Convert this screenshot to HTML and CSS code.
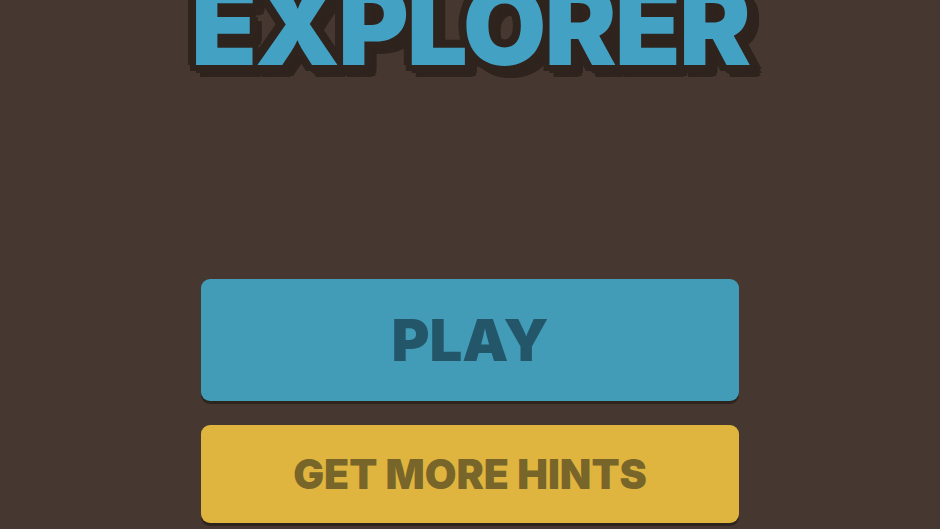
FILE: index.html
```html
<!DOCTYPE html>
<html>
<head>
<meta charset="utf-8">
<link rel="stylesheet" href="styles.css">
</head>
<body>
<main class="screen">
  <h1 class="title">EXPLORER</h1>
  <div class="menu">
    <button class="btn btn-play">PLAY</button>
    <button class="btn btn-hints">GET MORE HINTS</button>
  </div>
</main>
</body>
</html>
```
FILE: styles.css
```css
html, body {
  margin: 0;
  padding: 0;
  background: #463830;
}
.screen {
  width: 940px;
  height: 529px;
  overflow: hidden;
  display: flex;
  flex-direction: column;
  align-items: center;
  font-family: Inter, Lato, sans-serif;
}
.title {
  margin: -33px 0 0 0;
  font-size: 108px;
  line-height: 118px;
  font-weight: 900;
  color: #43a1c4;
  letter-spacing: -2px;
  text-shadow:
    -8px 0 0 #2e231d, 8px 0 0 #2e231d, 0 -8px 0 #2e231d, 0 8px 0 #2e231d,
    -6px -6px 0 #2e231d, 6px -6px 0 #2e231d, -6px 6px 0 #2e231d, 6px 6px 0 #2e231d,
    9px 9px 0 #2e231d, 11px 11px 0 #2e231d, 12px 8px 0 #2e231d, 8px 12px 0 #2e231d,
    4px 12px 0 #2e231d, 12px 4px 0 #2e231d;
}
.menu {
  margin-top: 194px;
  display: flex;
  flex-direction: column;
  gap: 24px;
}
.btn {
  width: 538px;
  border: none;
  border-radius: 9px;
  font-family: Inter, Lato, sans-serif;
  font-weight: 900;
  display: flex;
  align-items: center;
  justify-content: center;
  box-shadow: 0 3px 0 #2e241e;
  padding: 0;
}
.btn-play {
  height: 122px;
  background: #429cb8;
  color: #24566a;
  font-size: 58px;
}
.btn-hints {
  height: 98px;
  background: #e0b53f;
  color: #786529;
  font-size: 41px;
}
```
